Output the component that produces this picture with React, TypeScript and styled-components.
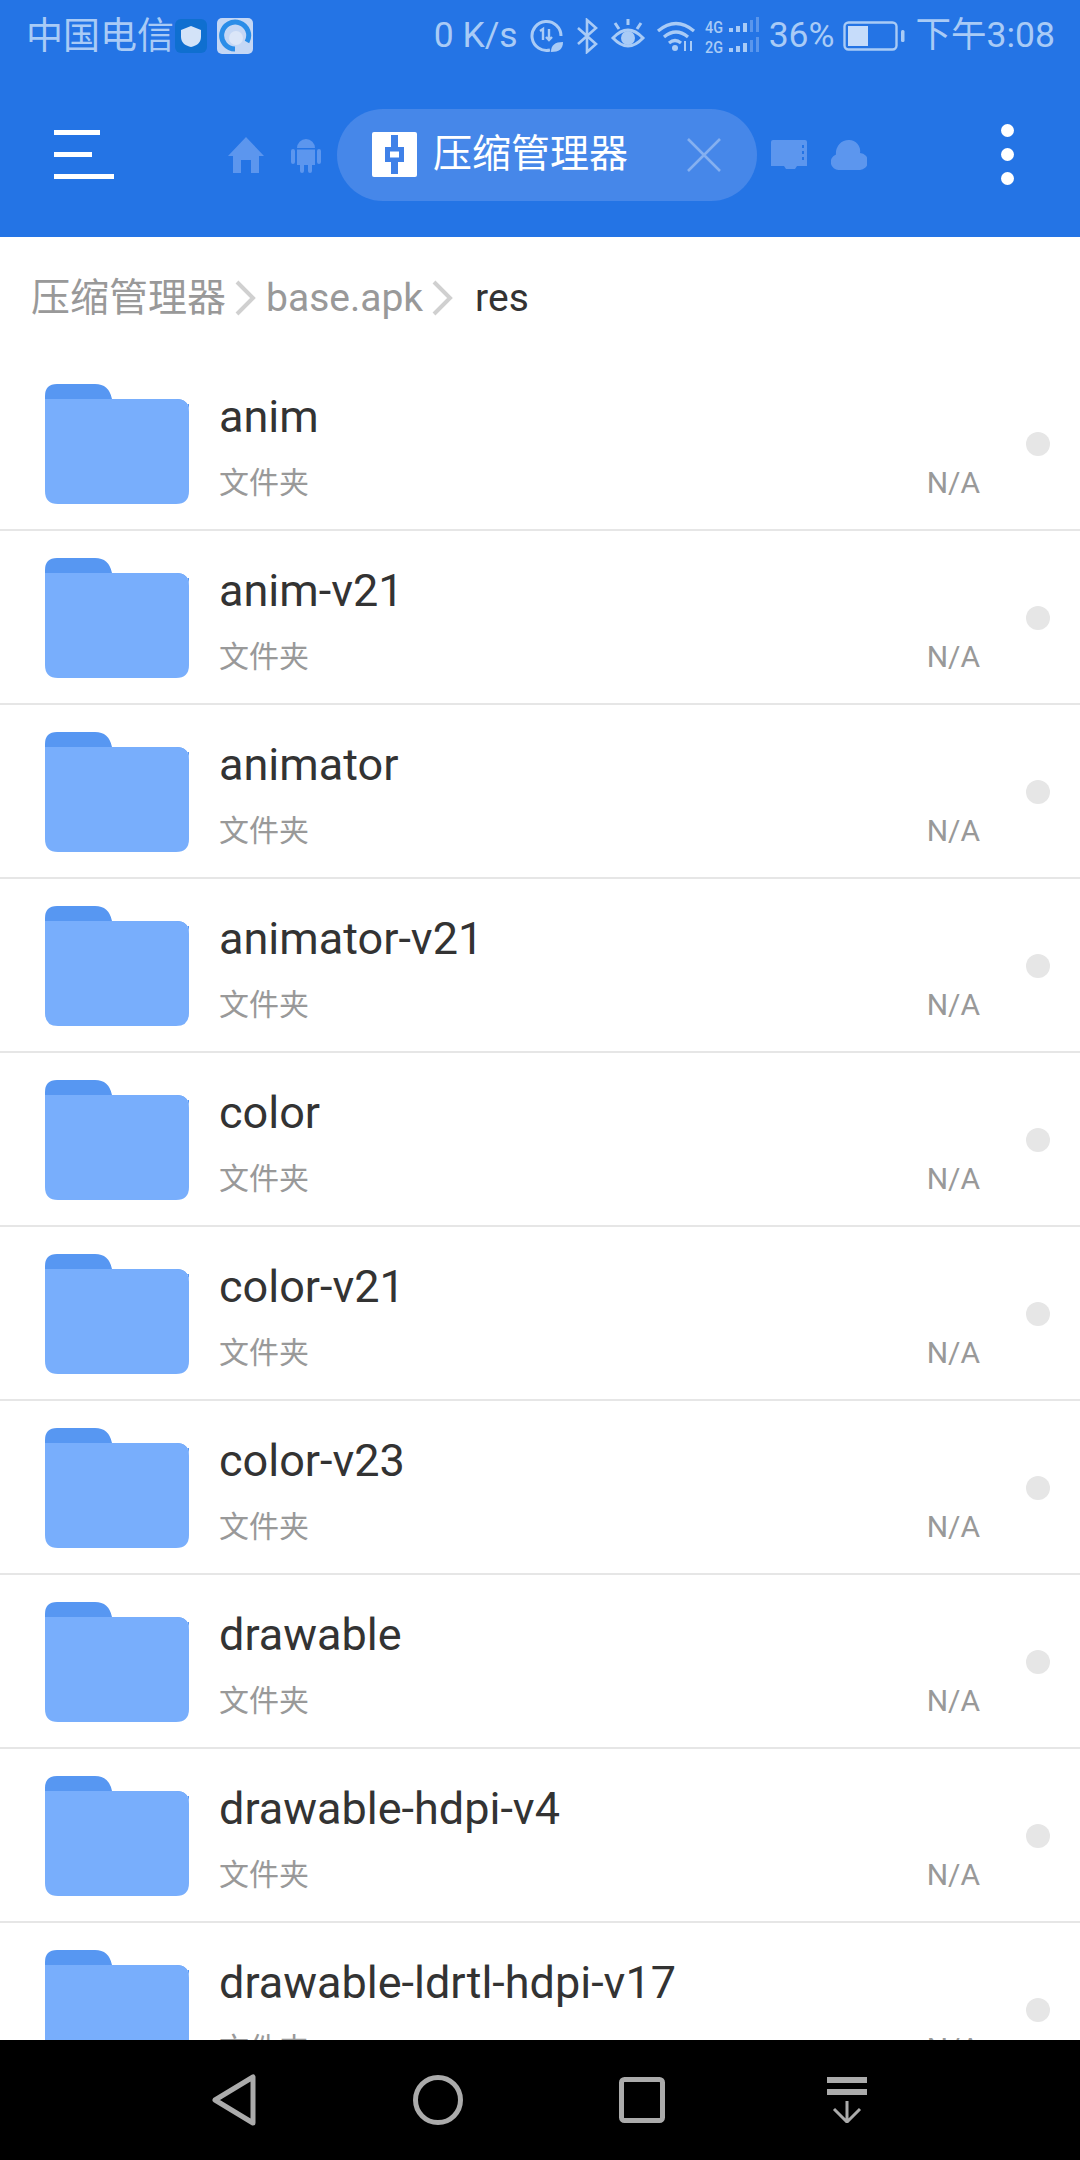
import * as React from 'react';
import styled, { createGlobalStyle } from 'styled-components';

const GlobalStyle = createGlobalStyle`
    html, body {
        margin: 0;
        padding: 0;
        background: #fff;
    }
    * {
        box-sizing: border-box;
    }
`;

const FONT = `Roboto, "Noto Sans CJK SC", sans-serif`;
const STATUS_COLOR = '#a9cbf6';
const TAB_ICON_COLOR = '#5c96ee';

const Page = styled.div`
    width: 1080px;
    height: 2160px;
    display: flex;
    flex-direction: column;
    overflow: hidden;
    background: #fff;
    font-family: ${FONT};
`;

const Header = styled.header`
    flex: none;
    height: 237px;
    background: #2474e5;
`;

const StatusBar = styled.div`
    height: 72px;
    display: flex;
    align-items: center;
    padding: 0 25px 0 26px;
    color: ${STATUS_COLOR};
    font-size: 35.5px;
    line-height: 1;
    white-space: nowrap;
`;

const Carrier = styled.span`
    font-size: 37px;
`;

const StatusRight = styled.div`
    margin-left: auto;
    display: flex;
    align-items: center;
`;

const StatusText = styled.span<{ $left?: number }>`
    margin-left: ${(props) => props.$left || 0}px;
`;

const StatusIcon = styled.svg<{ $left?: number }>`
    display: block;
    flex: none;
    margin-left: ${(props) => props.$left || 0}px;
`;

const Toolbar = styled.div`
    height: 165px;
    display: flex;
    align-items: center;
    padding-left: 54px;
`;

const MenuButton = styled.div`
    width: 60px;
    display: flex;
    flex-direction: column;
    gap: 17px;
`;

const MenuLine = styled.div<{ $width: number }>`
    width: ${(props) => props.$width}px;
    height: 5px;
    background: #fff;
`;

const TabIcon = styled.svg<{ $left: number }>`
    display: block;
    flex: none;
    margin-left: ${(props) => props.$left}px;
    fill: ${TAB_ICON_COLOR};
`;

const ActiveTab = styled.div`
    width: 420px;
    height: 92px;
    margin-left: 16px;
    padding: 0 35px;
    display: flex;
    align-items: center;
    border-radius: 46px;
    background: #4687e9;
`;

const ArchiveIcon = styled.svg`
    display: block;
    flex: none;
`;

const TabTitle = styled.span`
    margin-left: 16px;
    color: #fff;
    font-size: 39px;
    line-height: 1;
    white-space: nowrap;
`;

const TabClose = styled.svg`
    display: block;
    margin-left: auto;
`;

const OverflowButton = styled.div`
    margin-left: 134px;
    display: flex;
    flex-direction: column;
    gap: 11px;
`;

const OverflowDot = styled.div`
    width: 13px;
    height: 13px;
    border-radius: 50%;
    background: #fff;
`;

const Breadcrumb = styled.nav`
    flex: none;
    height: 120px;
    padding: 2px 0 0 31px;
    display: flex;
    align-items: center;
    font-size: 39px;
    line-height: 1;
    white-space: nowrap;
`;

const Crumb = styled.span<{ $current?: boolean }>`
    color: ${(props) => (props.$current ? '#333' : '#999')};
`;

const CrumbArrow = styled.svg<{ $right: number }>`
    display: block;
    flex: none;
    margin: 0 ${(props) => props.$right}px 0 9px;
`;

const List = styled.div`
    flex: 1;
    min-height: 0;
    overflow: hidden;
`;

const Row = styled.div`
    height: 174px;
    flex: none;
    padding: 27px 30px 0 45px;
    display: flex;
    align-items: flex-start;
    border-bottom: 2px solid #e6e6e6;
`;

const FolderIcon = styled.svg`
    display: block;
    flex: none;
`;

const RowBody = styled.div`
    flex: 1;
    min-width: 0;
    margin-left: 30px;
`;

const RowName = styled.div`
    height: 50px;
    margin-top: 8px;
    color: #333;
    font-size: 45px;
    line-height: 50px;
    white-space: nowrap;
`;

const RowMeta = styled.div`
    margin-top: 24px;
    display: flex;
    justify-content: space-between;
    color: #999;
    font-size: 30px;
    line-height: 34px;
`;

const SelectDot = styled.div`
    flex: none;
    width: 24px;
    height: 24px;
    margin: 48px 0 0 46px;
    border-radius: 50%;
    background: #e6e6e6;
`;

const NavBar = styled.div`
    flex: none;
    height: 120px;
    position: relative;
    background: #000;
    display: flex;
    align-items: center;
    padding-left: 212px;
`;

const NavIcon = styled.svg<{ $left?: number }>`
    display: block;
    flex: none;
    margin-left: ${(props) => props.$left || 0}px;
    fill: none;
    stroke: #ababab;
    stroke-width: 5;
`;

const ITEMS = [
    'anim',
    'anim-v21',
    'animator',
    'animator-v21',
    'color',
    'color-v21',
    'color-v23',
    'drawable',
    'drawable-hdpi-v4',
    'drawable-ldrtl-hdpi-v17',
];

const Folder = () => (
    <FolderIcon width="144" height="120" viewBox="0 0 144 120">
        <path d="M0 20V12Q0 0 12 0H50Q64 0 67 15H131Q144 15 144 28V20Z" fill="#5797f2" />
        <path d="M0 15H131Q144 15 144 28V107Q144 120 131 120H13Q0 120 0 107Z" fill="#78aefc" />
    </FolderIcon>
);

const StatusIcons = () => (
    <>
        {/* data saver */}
        <StatusIcon $left={12} width="34" height="34" viewBox="0 0 34 34" fill="none" stroke={STATUS_COLOR} strokeWidth="3">
            <path d="M20 31A14.5 14.5 0 1 1 31 17" />
            <path d="M10 12l3-2v11M19 10v11M16 18l3 3 3-3" strokeWidth="2.4" />
            <path d="M21 33c0-7 4-10 12-10 0 7-4 10-12 10z" fill={STATUS_COLOR} stroke="none" />
        </StatusIcon>
        {/* bluetooth */}
        <StatusIcon $left={12} width="22" height="36" viewBox="0 0 22 36" fill="none" stroke={STATUS_COLOR} strokeWidth="2.6">
            <path d="M2 10l18 16-9 8V2l9 8L2 26" />
        </StatusIcon>
        {/* eye comfort */}
        <StatusIcon $left={12} width="36" height="34" viewBox="0 0 36 34" fill="none" stroke={STATUS_COLOR} strokeWidth="3">
            <path d="M3 19Q18 3 33 19Q18 35 3 19Z" />
            <circle cx="18" cy="19" r="7" fill={STATUS_COLOR} stroke="none" />
            <path d="M5 4l4 6M18 0v6M31 4l-4 6" />
        </StatusIcon>
        {/* wifi */}
        <StatusIcon $left={10} width="40" height="32" viewBox="0 0 40 32" fill="none" stroke={STATUS_COLOR} strokeWidth="3.2">
            <path d="M2 11Q20 -4 38 11M8 17Q20 7 32 17M13 23Q19 18 25 23" />
            <circle cx="19" cy="28" r="3" fill={STATUS_COLOR} stroke="none" />
            <path d="M29 21v10M35 21v10" strokeWidth="2" />
        </StatusIcon>
        {/* dual sim signal */}
        <StatusIcon $left={9} width="58" height="40" viewBox="0 0 58 40">
            <text x="0" y="17" fontSize="17" fontWeight="500" fill={STATUS_COLOR} fontFamily="Roboto" textLength="18" lengthAdjust="spacingAndGlyphs">4G</text>
            <text x="0" y="37" fontSize="17" fontWeight="500" fill={STATUS_COLOR} fontFamily="Roboto" textLength="18" lengthAdjust="spacingAndGlyphs">2G</text>
            <path d="M24 12h4v4h-4zM31 10h4v6h-4zM38 7h4v9h-4zM24 32h4v4h-4zM31 30h4v6h-4zM38 27h4v9h-4z" fill={STATUS_COLOR} />
            <path d="M45 4h3v12h-3zM51 1h3v15h-3zM45 24h3v12h-3zM51 21h3v15h-3z" fill="#5a96ec" />
        </StatusIcon>
    </>
);

const Battery = () => (
    <StatusIcon $left={8} width="62" height="30" viewBox="0 0 62 30" fill="none">
        <rect x="1.5" y="1.5" width="52" height="27" rx="4" stroke={STATUS_COLOR} strokeWidth="2.4" />
        <rect x="5" y="5" width="20" height="20" fill="#c6dcfa" />
        <rect x="58" y="9" width="3.5" height="12" rx="1.5" fill={STATUS_COLOR} />
    </StatusIcon>
);

const App = () => (
    <Page>
        <GlobalStyle />
        <Header>
            <StatusBar>
                <Carrier>中国电信</Carrier>
                {/* shield notification */}
                <StatusIcon $left={1} width="32" height="34" viewBox="0 0 32 34">
                    <rect width="32" height="34" rx="6" fill="#0f6fd0" />
                    <path d="M16 7l10 4v7c0 6-5 9-10 10-5-1-10-4-10-10v-7z" fill="#d3e3f8" />
                </StatusIcon>
                {/* browser notification */}
                <StatusIcon $left={10} width="36" height="36" viewBox="0 0 36 36">
                    <rect width="36" height="36" rx="5" fill="#c4d7f5" />
                    <path d="M30 24A13.5 13.5 0 1 0 18 31" fill="none" stroke="#2a8de8" strokeWidth="5" />
                    <circle cx="19" cy="20" r="7" fill="#dbe6f8" />
                </StatusIcon>
                <StatusRight>
                    <StatusText>0 K/s</StatusText>
                    <StatusIcons />
                    <StatusText $left={6}>36%</StatusText>
                    <Battery />
                    <StatusText $left={11}>下午3:08</StatusText>
                </StatusRight>
            </StatusBar>
            <Toolbar>
                <MenuButton>
                    <MenuLine $width={46} />
                    <MenuLine $width={38} />
                    <MenuLine $width={60} />
                </MenuButton>
                {/* home */}
                <TabIcon $left={114} width="36" height="36" viewBox="0 0 36 36">
                    <path d="M18 0L36 19H31V36H23V23H13V36H5V19H0Z" />
                </TabIcon>
                {/* android */}
                <TabIcon $left={27} width="30" height="36" viewBox="0 0 30 36">
                    <path d="M6 11a9 9 0 0 1 18 0zM6 12.500h18V28h-3v6a2 2 0 0 1-4 0v-6h-4v6a2 2 0 0 1-4 0v-6H6zM0 14a2 2 0 0 1 4 0v11a2 2 0 0 1-4 0zM26 14a2 2 0 0 1 4 0v11a2 2 0 0 1-4 0z" />
                </TabIcon>
                <ActiveTab>
                    {/* archive with zipper */}
                    <ArchiveIcon width="45" height="45" viewBox="0 0 45 45">
                        <rect width="45" height="45" rx="2" fill="#fff" />
                        <path d="M19 3h7v12h-7zM19 30h7v12h-7z" fill="#3f81e8" />
                        <path fillRule="evenodd" d="M13 15h19v15H13zM18 19.500v6h9v-6z" fill="#3f81e8" />
                    </ArchiveIcon>
                    <TabTitle>压缩管理器</TabTitle>
                    <TabClose width="36" height="36" viewBox="0 0 36 36" fill="none" stroke="#85b0f0" strokeWidth="2.6">
                        <path d="M2 2L34 34M34 2L2 34" />
                    </TabClose>
                </ActiveTab>
                {/* sd card */}
                <TabIcon $left={14} width="36" height="30" viewBox="0 0 36 30">
                    <path fillRule="evenodd" d="M2 0H34a2 2 0 0 1 2 2V26H26l-2 3H15l-2-3H0V2a2 2 0 0 1 2-2zM31 5v3h2V5zM31 11v3h2v-3zM31 17v3h2v-3z" />
                </TabIcon>
                {/* cloud */}
                <TabIcon $left={24} width="36" height="30" viewBox="0 0 36 30">
                    <path d="M8 30A8 8 0 0 1 5 14.500 13 13 0 0 1 18 0a11 11 0 0 1 11 13A8.500 8.500 0 0 1 28 30z" />
                </TabIcon>
                <OverflowButton>
                    <OverflowDot />
                    <OverflowDot />
                    <OverflowDot />
                </OverflowButton>
            </Toolbar>
        </Header>
        <Breadcrumb>
            <Crumb>压缩管理器</Crumb>
            <CrumbArrow $right={10} width="21" height="36" viewBox="0 0 21 36" fill="none" stroke="#d0d0d0" strokeWidth="4">
                <path d="M2 2L18 18L2 34" />
            </CrumbArrow>
            <Crumb>base.apk</Crumb>
            <CrumbArrow $right={22} width="21" height="36" viewBox="0 0 21 36" fill="none" stroke="#d0d0d0" strokeWidth="4">
                <path d="M2 2L18 18L2 34" />
            </CrumbArrow>
            <Crumb $current>res</Crumb>
        </Breadcrumb>
        <List>
            {ITEMS.map((name) => (
                <Row key={name}>
                    <Folder />
                    <RowBody>
                        <RowName>{name}</RowName>
                        <RowMeta>
                            <span>文件夹</span>
                            <span>N/A</span>
                        </RowMeta>
                    </RowBody>
                    <SelectDot />
                </Row>
            ))}
        </List>
        <NavBar>
            <NavIcon width="44" height="52" viewBox="0 0 44 52">
                <path d="M41 3V49L3 26Z" strokeLinejoin="round" />
            </NavIcon>
            <NavIcon $left={157} width="50" height="50" viewBox="0 0 50 50">
                <circle cx="25" cy="25" r="22.500" />
            </NavIcon>
            <NavIcon $left={156} width="46" height="46" viewBox="0 0 46 46">
                <rect x="2.500" y="2.500" width="41" height="41" rx="3" />
            </NavIcon>
            <NavIcon $left={162} width="40" height="46" viewBox="0 0 40 46">
                <path d="M0 3H40M0 15H40" strokeWidth="6" />
                <path d="M20 24V45M7 32L20 45L33 32" strokeWidth="3" />
            </NavIcon>
        </NavBar>
    </Page>
);

export default App;
